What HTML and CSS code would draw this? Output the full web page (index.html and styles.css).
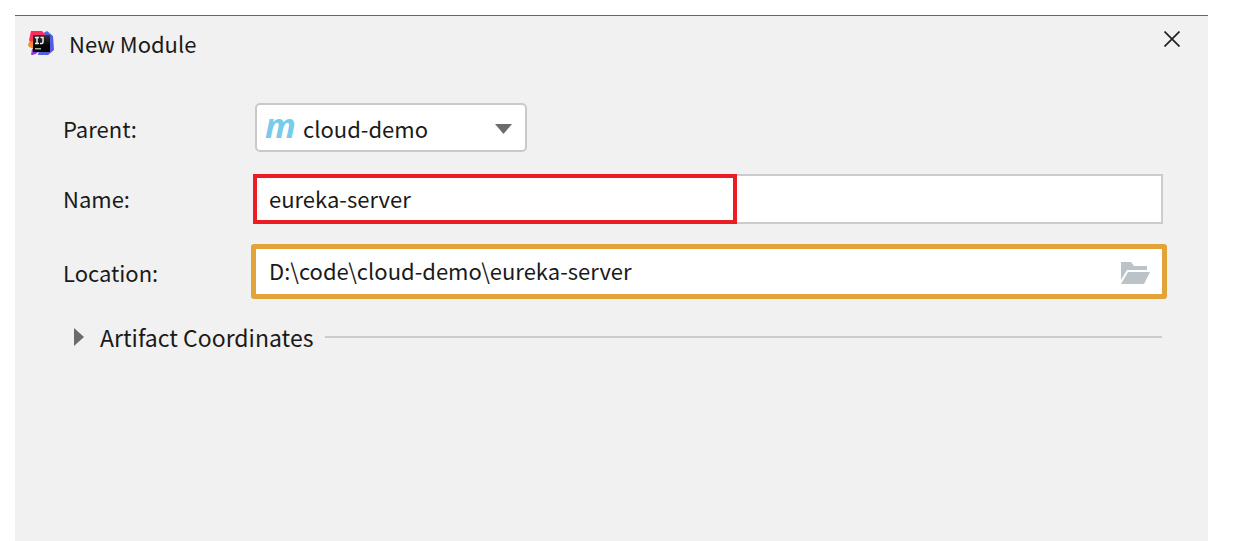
FILE: index.html
```html
<!DOCTYPE html>
<html lang="en">
<head>
<meta charset="utf-8">
<title>New Module</title>
<link rel="stylesheet" href="styles.css">
</head>
<body>
<main class="dialog">
  <header class="titlebar">
    <svg class="logo" viewBox="0 0 26 26" aria-hidden="true">
      <defs>
        <linearGradient id="pink" x1="0" y1="0" x2="0" y2="1"><stop offset="0" stop-color="#fb2b63"/><stop offset=".5" stop-color="#fe3a50"/><stop offset="1" stop-color="#9a35c8"/></linearGradient>
        <linearGradient id="blue" x1="0" y1="0" x2="1" y2="1"><stop offset="0" stop-color="#3d6fe8"/><stop offset="1" stop-color="#5a55dc"/></linearGradient>
        <linearGradient id="dark" x1="0" y1="0" x2="0" y2="1"><stop offset="0" stop-color="#37373b"/><stop offset=".6" stop-color="#050505"/></linearGradient>
      </defs>
      <path fill="url(#blue)" d="M14 4 19 1l6 5 1 14-6 5H10l2-9z"/>
      <path fill="url(#pink)" d="M3 1h11l5 5-4 14-11 5 1-7-4-8z"/>
      <path fill="#fb8a2c" d="M1 12l5-1v8l-5-2-1-2z"/>
      <path fill="#8b3bd0" d="M4 19h7l-3 5-5 1z"/>
      <path fill="url(#dark)" d="M5 5h17v17H5z"/>
      <path fill="none" stroke="#eee" stroke-width="1.500" d="M7 7.500h4M9 7.500v6M7 13.500h4M12.500 7.500H15v4.500q0 1.500-1.500 1.500H12"/>
      <path fill="#aaa" d="M7 18h6v1.500H7z"/>
    </svg>
    <h1 class="title">New Module</h1>
    <button class="close" type="button" aria-label="Close">
      <svg viewBox="0 0 16 16"><path d="M.5.5l15 15M15.500.5l-15 15" fill="none" stroke="#222" stroke-width="1.700"/></svg>
    </button>
  </header>
  <form class="form">
    <label for="parent">Parent:</label>
    <div class="parent">
      <select id="parent" class="select"><option>cloud-demo</option></select>
      <span class="maven" aria-hidden="true">m</span>
      <svg class="arrow" viewBox="0 0 17 10" aria-hidden="true"><path d="M0 0h17L8.500 10z" fill="#6b6b6b"/></svg>
    </div>
    <label for="name">Name:</label>
    <div class="name">
      <input id="name" class="input" type="text" value="eureka-server">
      <span class="highlight"></span>
    </div>
    <label for="location">Location:</label>
    <div class="location">
      <input id="location" class="input" type="text" value="D:\code\cloud-demo\eureka-server">
      <button class="browse" type="button" aria-label="Browse">
        <svg viewBox="0 0 30 23"><path fill="#bcc3c8" d="M1 1h10l3 4h13v4H7L1 19zM8 11h22l-6 12H1z"/></svg>
      </button>
    </div>
  </form>
  <div class="section">
    <button class="toggle" type="button" aria-expanded="false">
      <svg viewBox="0 0 10 18" aria-hidden="true"><path d="M0 0l10 9-10 9z" fill="#6b6b6b"/></svg>
      Artifact Coordinates
    </button>
    <hr class="rule">
  </div>
</main>
</body>
</html>
```
FILE: styles.css
```css
* { box-sizing: border-box; }
body {
  margin: 0;
  background: #fff;
  color: #1a1a1a;
  font: 22px/32px "Noto Sans CJK SC", "Noto Sans", sans-serif;
}
button, input, select {
  margin: 0;
  padding: 0;
  border: 0;
  background: none;
  color: inherit;
  font: inherit;
}
svg { display: block; }
.dialog {
  min-height: calc(100vh - 15px);
  margin: 15px 43px 0 15px;
  border-top: 1px solid #666;
  background: #f1f1f1;
}
.titlebar {
  display: flex;
  align-items: center;
  height: 53px;
  padding: 0 28px 0 13px;
}
.logo { width: 26px; height: 26px; }
.title {
  flex: 1;
  margin: 0 0 0 15px;
  font-size: 22px;
  font-weight: 400;
}
.close { padding-bottom: 8px; }
.close svg { width: 16px; height: 16px; }
.form {
  display: grid;
  grid-template-columns: 188px 1fr;
  align-items: center;
  row-gap: 20px;
  padding: 34px 41px 0 48px;
}
.parent {
  position: relative;
  width: 272px;
  margin-left: 4px;
}
.select {
  width: 100%;
  height: 49px;
  padding-left: 46px;
  appearance: none;
  border: 2px solid #c9c9c9;
  border-radius: 5px;
  background: #fff;
}
.maven {
  position: absolute;
  top: 4px;
  left: 10px;
  color: #78cbe9;
  font: italic 700 34px/36px "Open Sans", sans-serif;
}
.arrow {
  position: absolute;
  top: 21px;
  right: 15px;
  width: 17px;
  height: 10px;
}
.name {
  position: relative;
  margin: 2px 4px 0 2px;
}
.input { width: 100%; background: #fff; }
.name .input {
  display: block;
  height: 50px;
  padding: 0 14px 2px;
  border: 2px solid #ccc;
}
.highlight {
  position: absolute;
  inset: 0 auto 0 0;
  width: 484px;
  border: 4px solid #ec1c24;
  pointer-events: none;
}
.location {
  display: flex;
  align-items: center;
  height: 55px;
  border: 5px solid #e2a439;
  border-radius: 3px;
  background: #fff;
}
.location .input { flex: 1; min-width: 0; padding: 0 13px 4px; }
.browse { padding: 2px 12px 0 0; }
.browse svg { width: 30px; height: 23px; }
.section {
  display: flex;
  align-items: center;
  gap: 12px;
  padding: 22px 46px 0 59px;
}
.toggle {
  display: flex;
  align-items: center;
  gap: 16px;
  font-size: 23px;
  white-space: nowrap;
}
.toggle svg { width: 10px; height: 18px; }
.rule {
  flex: 1;
  margin: 0;
  border: 0;
  border-top: 2px solid #ccc;
}
```
